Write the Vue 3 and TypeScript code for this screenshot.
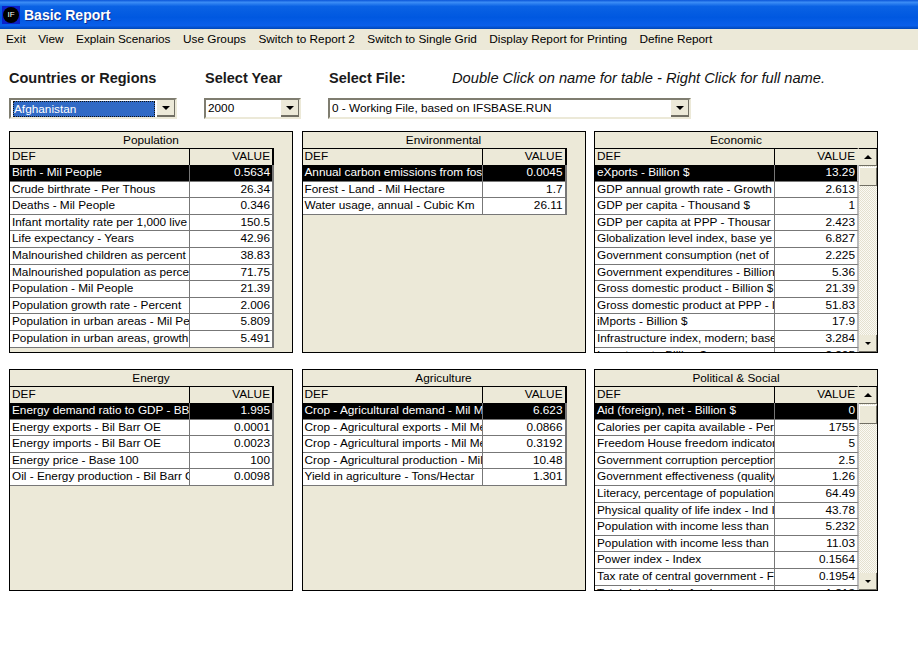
<script setup lang="ts">
interface Row {
  name: string
  value: string
}

interface Panel {
  title: string
  scroll?: boolean
  rows: Row[]
}

const menuItems = [
  'Exit',
  'View',
  'Explain Scenarios',
  'Use Groups',
  'Switch to Report 2',
  'Switch to Single Grid',
  'Display Report for Printing',
  'Define Report',
]

const panels: Panel[] = [
  {
    title: 'Population',
    rows: [
      { name: 'Birth - Mil People', value: '0.5634' },
      { name: 'Crude birthrate - Per Thous', value: '26.34' },
      { name: 'Deaths - Mil People', value: '0.346' },
      { name: 'Infant mortality rate per 1,000 live', value: '150.5' },
      { name: 'Life expectancy - Years', value: '42.96' },
      { name: 'Malnourished children as percent', value: '38.83' },
      { name: 'Malnourished population as perce', value: '71.75' },
      { name: 'Population - Mil People', value: '21.39' },
      { name: 'Population growth rate - Percent', value: '2.006' },
      { name: 'Population in urban areas - Mil Pe', value: '5.809' },
      { name: 'Population in urban areas, growth', value: '5.491' },
    ],
  },
  {
    title: 'Environmental',
    rows: [
      { name: 'Annual carbon emissions from fos', value: '0.0045' },
      { name: 'Forest - Land - Mil Hectare', value: '1.7' },
      { name: 'Water usage, annual - Cubic Km', value: '26.11' },
    ],
  },
  {
    title: 'Economic',
    scroll: true,
    rows: [
      { name: 'eXports - Billion $', value: '13.29' },
      { name: 'GDP annual growth rate - Growth', value: '2.613' },
      { name: 'GDP per capita - Thousand $', value: '1' },
      { name: 'GDP per capita at PPP - Thousar', value: '2.423' },
      { name: 'Globalization level index, base ye', value: '6.827' },
      { name: 'Government consumption (net of', value: '2.225' },
      { name: 'Government expenditures - Billion', value: '5.36' },
      { name: 'Gross domestic product - Billion $', value: '21.39' },
      { name: 'Gross domestic product at PPP - I', value: '51.83' },
      { name: 'iMports - Billion $', value: '17.9' },
      { name: 'Infrastructure index, modern; base', value: '3.284' },
      { name: 'Investment - Billion $', value: '2.205' },
    ],
  },
  {
    title: 'Energy',
    rows: [
      { name: 'Energy demand ratio to GDP - BB', value: '1.995' },
      { name: 'Energy exports - Bil Barr OE', value: '0.0001' },
      { name: 'Energy imports - Bil Barr OE', value: '0.0023' },
      { name: 'Energy price - Base 100', value: '100' },
      { name: 'Oil - Energy production - Bil Barr C', value: '0.0098' },
    ],
  },
  {
    title: 'Agriculture',
    rows: [
      { name: 'Crop - Agricultural demand - Mil M', value: '6.623' },
      { name: 'Crop - Agricultural exports - Mil Me', value: '0.0866' },
      { name: 'Crop - Agricultural imports - Mil Me', value: '0.3192' },
      { name: 'Crop - Agricultural production - Mil', value: '10.48' },
      { name: 'Yield in agriculture - Tons/Hectar', value: '1.301' },
    ],
  },
  {
    title: 'Political & Social',
    scroll: true,
    rows: [
      { name: 'Aid (foreign), net - Billion $', value: '0' },
      { name: 'Calories per capita available - Per', value: '1755' },
      { name: 'Freedom House freedom indicator', value: '5' },
      { name: 'Government corruption perception', value: '2.5' },
      { name: 'Government effectiveness (quality', value: '1.26' },
      { name: 'Literacy, percentage of population', value: '64.49' },
      { name: 'Physical quality of life index - Ind I', value: '43.78' },
      { name: 'Population with income less than', value: '5.232' },
      { name: 'Population with income less than ', value: '11.03' },
      { name: 'Power index - Index', value: '0.1564' },
      { name: 'Tax rate of central government - F', value: '0.1954' },
      { name: 'Total debt, indian foreign', value: '1.213' },
    ],
  },
]
</script>

<template>
  <div class="window">
    <div class="title-bar">
      <span class="app-icon"><span class="app-badge">IF</span></span>
      <span class="title-text">Basic Report</span>
    </div>
    <div class="menu-bar">
      <span v-for="item in menuItems" :key="item" class="menu-item">{{ item }}</span>
    </div>

    <div class="labels">
      <span class="label label-country">Countries or Regions</span>
      <span class="label label-year">Select Year</span>
      <span class="label label-file">Select File:</span>
      <span class="hint">Double Click on name for table - Right Click for full name.</span>
    </div>

    <div class="selects">
      <div class="combo combo-country">
        <span class="combo-text"><span class="combo-selected">Afghanistan</span></span>
        <span class="combo-btn"><i class="arrow-down"></i></span>
      </div>
      <div class="combo combo-year">
        <span class="combo-text">2000</span>
        <span class="combo-btn"><i class="arrow-down"></i></span>
      </div>
      <div class="combo combo-file">
        <span class="combo-text">0 - Working File, based on IFSBASE.RUN</span>
        <span class="combo-btn"><i class="arrow-down"></i></span>
      </div>
    </div>

    <div class="panels">
      <section v-for="panel in panels" :key="panel.title" :class="['panel', panel.scroll ? 'scrolled' : '']">
        <div class="panel-title">{{ panel.title }}</div>
        <div class="grid-wrap">
          <div class="grid">
            <div class="grid-head">
              <span class="cell-def">DEF</span>
              <span class="cell-val">VALUE</span>
            </div>
            <div
              v-for="(row, i) in panel.rows"
              :key="row.name"
              :class="['grid-row', i === 0 ? 'active' : '']"
            >
              <span class="cell-def">{{ row.name }}</span>
              <span class="cell-val">{{ row.value }}</span>
            </div>
          </div>
          <div v-if="panel.scroll" class="scrollbar">
            <span class="scroll-btn"><i class="arrow-up"></i></span>
            <span class="scroll-thumb"></span>
            <span class="scroll-track"></span>
            <span class="scroll-btn"><i class="arrow-down small"></i></span>
          </div>
        </div>
      </section>
    </div>
  </div>
</template>

<style scoped>
.window {
  width: 918px;
  height: 667px;
  overflow: hidden;
  background: #fff;
  font-family: "Liberation Sans", Arial, sans-serif;
  font-size: 11.8px;
  color: #000;
}

.title-bar {
  height: 29px;
  display: flex;
  align-items: center;
  gap: 4px;
  padding-left: 2px;
  box-sizing: border-box;
  background: linear-gradient(180deg, #0a55d8 0%, #3b8cf5 8%, #0a62e4 22%, #0058e0 60%, #0a5fea 88%, #0047b8 100%);
}

.app-icon {
  width: 18px;
  height: 18px;
  display: flex;
  align-items: center;
  justify-content: center;
  background: #0a20c8;
}

.app-badge {
  width: 16px;
  height: 16px;
  border-radius: 50%;
  background: #000;
  color: #fff;
  font-size: 8px;
  line-height: 16px;
  text-align: center;
}

.title-text {
  color: #fff;
  font-size: 14px;
  font-weight: bold;
  text-shadow: 1px 1px 0 #0f2f90;
}

.menu-bar {
  height: 21px;
  display: flex;
  align-items: center;
  gap: 12.5px;
  padding: 0 0 2px 6px;
  box-sizing: border-box;
  background: #ece9d8;
}

.labels {
  display: flex;
  align-items: baseline;
  height: 28px;
  padding: 20px 0 0 9px;
}

.label {
  font-size: 14.5px;
  font-weight: bold;
  color: #1a1a1a;
}

.label-country { width: 196px; }
.label-year { width: 124px; }
.label-file { width: 123px; }

.hint {
  font-size: 14.7px;
  font-style: italic;
  color: #111;
}

.selects {
  display: flex;
  padding-left: 9px;
}

.combo {
  height: 21px;
  display: flex;
  box-sizing: border-box;
  border: 2px solid;
  border-color: #7f7d70 #ece9d8 #ece9d8 #7f7d70;
  background: #fff;
}

.combo-country { width: 168px; margin-right: 27px; }
.combo-year { width: 97px; margin-right: 27px; }
.combo-file { width: 363px; }

.combo-text {
  flex: 1;
  padding: 1px 2px;
  line-height: 15px;
  overflow: hidden;
  white-space: nowrap;
}

.combo-selected {
  display: block;
  padding: 1px;
  height: 14px;
  line-height: 15px;
  background: #316ac5;
  color: #fff;
  outline: 1px dotted #111;
  outline-offset: -1px;
}

.combo-btn {
  width: 18px;
  display: flex;
  align-items: center;
  justify-content: center;
  background: #ece9d8;
  border-right: 1px solid #716f64;
  border-bottom: 2px solid #716f64;
  box-sizing: border-box;
}

.arrow-down {
  width: 0;
  height: 0;
  border-left: 4px solid transparent;
  border-right: 4px solid transparent;
  border-top: 4px solid #000;
}

.arrow-down.small {
  border-left-width: 3px;
  border-right-width: 3px;
  border-top-width: 3px;
}

.arrow-up {
  width: 0;
  height: 0;
  border-left: 4px solid transparent;
  border-right: 4px solid transparent;
  border-bottom: 4px solid #000;
}

.panels {
  display: grid;
  grid-template-columns: repeat(3, 284px);
  grid-auto-rows: 222px;
  column-gap: 8.5px;
  row-gap: 16px;
  padding: 12px 0 0 9px;
}

.panel {
  box-sizing: border-box;
  border: 1px solid #000;
  background: #ece9d8;
  overflow: hidden;
  display: flex;
  flex-direction: column;
}

.panel-title {
  height: 16px;
  line-height: 17px;
  text-align: center;
}

.grid-wrap {
  display: flex;
  flex: 1;
  min-height: 0;
}

.grid {
  width: 264px;
  flex: none;
  height: fit-content;
}

.grid-head,
.grid-row {
  display: grid;
  grid-template-columns: 180px 82px;
  overflow: hidden;
  border-right: 2px solid #777;
}

.grid-head {
  height: 17px;
  line-height: 15px;
  border-top: 1px solid #000;
  border-right-color: #000;
  box-sizing: border-box;
}

.scrolled .grid-head {
  border-right-color: #ece9d8;
}

.scrolled .grid-row {
  border-right-color: #bbb;
}

.grid-head .cell-def {
  border-right: 1px solid #000;
  padding-left: 2px;
}

.grid-head .cell-val {
  text-align: right;
  padding-right: 2px;
}

.grid-row {
  height: 16.6px;
  box-sizing: border-box;
  line-height: 15px;
  background: #fff;
  border-bottom: 1px solid #777;
}

.grid-row .cell-def {
  border-right: 1px solid #777;
  padding-left: 2px;
  white-space: nowrap;
  overflow: hidden;
}

.grid-row .cell-val {
  text-align: right;
  padding-right: 2px;
}

.grid-row.active {
  background: #000;
  color: #fff;
}

.scrollbar {
  width: 18px;
  display: flex;
  flex-direction: column;
  border-top: 1px solid #000;
  background: repeating-conic-gradient(#fbfaf5 0 25%, #e4e1cf 0 50%) 0 0 / 2px 2px;
}

.scroll-btn {
  height: 17px;
  flex: none;
  display: flex;
  align-items: center;
  justify-content: center;
  background: #ece9d8;
  box-sizing: border-box;
  border-right: 1px solid #716f64;
  border-bottom: 1px solid #716f64;
}

.scroll-thumb {
  height: 19px;
  flex: none;
  margin-top: 1px;
  background: #ece9d8;
  box-sizing: border-box;
  border-right: 1px solid #716f64;
  border-bottom: 1px solid #716f64;
  border-top: 1px solid #fff;
  border-left: 1px solid #fff;
}

.scroll-track {
  flex: 1;
}
</style>

<style>
html,
body {
  margin: 0;
  background: #fff;
}
</style>
